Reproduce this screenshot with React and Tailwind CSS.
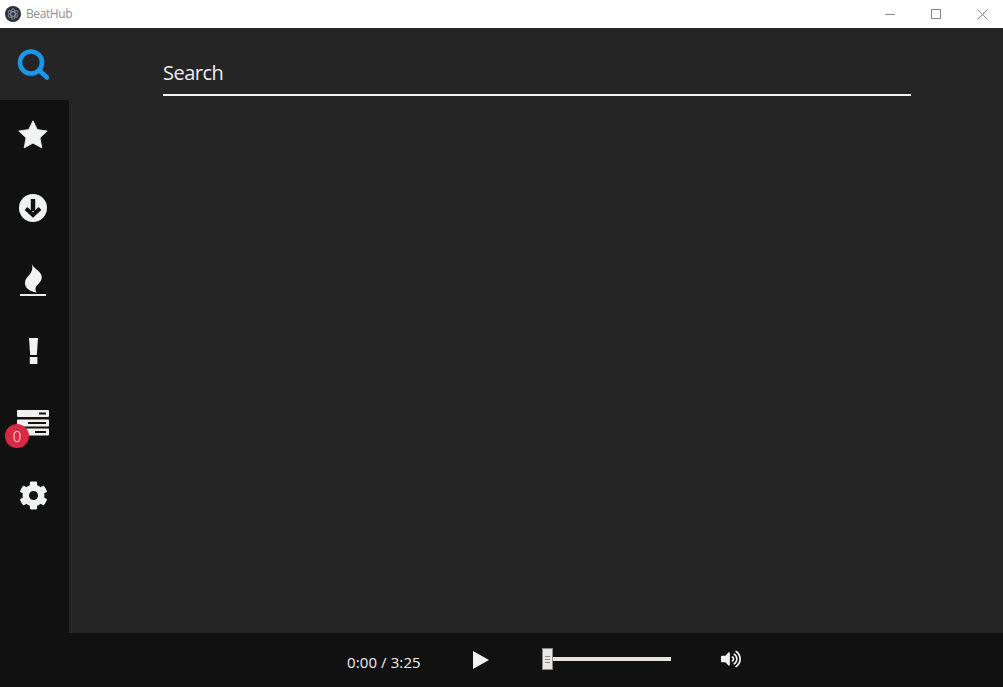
import React from 'react';
import { FaCog, FaVolumeUp } from 'react-icons/fa';

const font = { fontFamily: '"Open Sans", "Noto Sans", sans-serif' };

const SearchIcon = () => (
  <svg viewBox="0 0 32 32" className="w-8 h-8 mt-[2px]" fill="none" stroke="#1b96e8" strokeWidth="4.6" strokeLinecap="round">
    <circle cx="14" cy="13.5" r="11" />
    <path d="M22.5 21.5L30 28.5" />
  </svg>
);

const StarIcon = () => (
  <svg viewBox="0 0 30 29" className="w-[30px] h-[29px] mt-[-3px]" fill="#f1f3f3" stroke="#f1f3f3" strokeWidth="0.8" strokeLinejoin="round">
    <path d="M15 0.8L19.3 9.6L29.2 11L22 17.8L23.8 27.9L15 23.1L6.2 27.9L8 17.8L0.8 11L10.7 9.6Z" />
  </svg>
);

const DownloadIcon = () => (
  <svg viewBox="0 0 28 28" className="w-7 h-7">
    <circle cx="14" cy="14" r="14" fill="#f1f3f3" />
    <rect x="11.8" y="5" width="4.4" height="12" fill="#111111" />
    <path d="M7 14.5L14 21L21 14.5" fill="none" stroke="#111111" strokeWidth="4" />
  </svg>
);

const FlameIcon = () => (
  <svg viewBox="0 0 28 32" className="w-7 h-8 mt-[-1px]" fill="#f1f3f3">
    <path d="M12.7 0C14 3 18 5.5 20.8 8.5C23 11 23.3 14 22 16.5C20.5 19.5 17.5 21 16.7 23.5C16.2 25.3 16.5 27 17.5 28.5C13.5 28 8.5 26 6.8 22.5C5 18.5 6.3 15 9.3 12C12 9.2 14.5 5.5 12.7 0Z" />
    <rect x="1" y="30" width="26" height="2" fill="#ecebe8" />
  </svg>
);

const ExclaimIcon = () => (
  <svg viewBox="0 0 9 26" className="w-[9px] h-[26px] mt-[-2px]" fill="#f1f3f3">
    <path d="M0 0H9L7.8 17H1.2Z" />
    <rect x="0.8" y="19" width="7.6" height="7" />
  </svg>
);

const QueueIcon = () => (
  <svg viewBox="0 0 32 26" className="w-8 h-[26px] mt-[-2px]">
    <rect x="0" y="0" width="32" height="7" rx="1" fill="#f1f0ee" />
    <rect x="22" y="2.5" width="7" height="2" fill="#111" />
    <rect x="0" y="9.5" width="32" height="7" rx="1" fill="#f1f0ee" />
    <rect x="11" y="12" width="18" height="2" fill="#111" />
    <rect x="0" y="18.5" width="32" height="7" rx="1" fill="#f1f0ee" />
    <rect x="18" y="21" width="11" height="2" fill="#111" />
  </svg>
);

const AppLogo = () => (
  <svg viewBox="0 0 16 16" className="w-4 h-4">
    <circle cx="8" cy="8" r="8" fill="#2b2e3a" />
    <g fill="none" stroke="#a5b0bd" strokeWidth="0.7">
      <ellipse cx="8" cy="8" rx="5.5" ry="2.2" transform="rotate(30 8 8)" />
      <ellipse cx="8" cy="8" rx="5.5" ry="2.2" transform="rotate(90 8 8)" />
      <ellipse cx="8" cy="8" rx="5.5" ry="2.2" transform="rotate(150 8 8)" />
    </g>
  </svg>
);

const TitleBar = () => (
  <div className="h-7 shrink-0 bg-white flex items-center justify-between">
    <div className="flex items-center pl-[5px]">
      <AppLogo />
      <span className="ml-[5px] text-[12px] tracking-[-0.4px] text-[#8f8f8f]">BeatHub</span>
    </div>
    <div className="flex items-center mr-[-2px]">
      <div className="w-[46px] h-7 flex items-center justify-center">
        <svg viewBox="0 0 10 10" className="w-2.5 h-2.5"><path d="M0 5.5h10" stroke="#8a8a8a" /></svg>
      </div>
      <div className="w-[46px] h-7 flex items-center justify-center">
        <svg viewBox="0 0 10 10" className="w-2.5 h-2.5"><rect x="0.5" y="0.5" width="9" height="9" fill="none" stroke="#8a8a8a" /></svg>
      </div>
      <div className="w-[46px] h-7 flex items-center justify-center">
        <svg viewBox="0 0 11 11" className="w-[11px] h-[11px]"><path d="M0.5 0.5l10 10M10.5 0.5l-10 10" stroke="#8a8a8a" /></svg>
      </div>
    </div>
  </div>
);

const NavItem = ({ active, children }) => (
  <div className={`relative h-[72px] pr-[3px] flex items-center justify-center ${active ? 'bg-[#252525]' : ''}`}>
    {children}
  </div>
);

const Sidebar = () => (
  <nav className="w-[69px] shrink-0 bg-[#111111] flex flex-col">
    <NavItem active><SearchIcon /></NavItem>
    <NavItem><StarIcon /></NavItem>
    <NavItem><DownloadIcon /></NavItem>
    <NavItem><FlameIcon /></NavItem>
    <NavItem><ExclaimIcon /></NavItem>
    <NavItem>
      <QueueIcon />
      <span className="absolute left-[5px] top-[36px] w-6 h-6 rounded-full bg-[#d62a45] text-white text-[15px] font-light flex items-center justify-center">0</span>
    </NavItem>
    <NavItem><FaCog className="w-[29px] h-[29px] mt-[-2px] text-[#f1f3f3]" /></NavItem>
  </nav>
);

const PlayerBar = () => (
  <div className="h-[54px] shrink-0 bg-[#111111] flex items-center text-[#eeeeee]">
    <span className="ml-[347px] w-[100px] text-[15px] mt-[4px] tracking-[0.1px] whitespace-nowrap">0:00 / 3:25</span>
    <svg viewBox="0 0 16 18" className="ml-[26px] mt-[-1px] w-4 h-[18px]"><path d="M0 0L16 9L0 18Z" fill="#f1f3f3" /></svg>
    <div className="ml-[53px] w-[129px] h-[22px] mt-[-2px] relative flex items-center">
      <div className="w-full h-1 bg-[#e8e4df]" />
      <div className="absolute left-0 top-0 w-[11px] h-[22px] bg-[#e8e8e8] border border-[#8c8884] flex flex-col items-center justify-center gap-[2px]">
        <div className="w-[5px] h-px bg-[#8c8884]" />
        <div className="w-[5px] h-px bg-[#8c8884]" />
        <div className="w-[5px] h-px bg-[#8c8884]" />
      </div>
    </div>
    <FaVolumeUp className="ml-[50px] mt-[-2px] w-5 h-5 text-[#f1f3f3]" />
  </div>
);

export default function App() {
  return (
    <div className="w-[1003px] h-[687px] flex flex-col overflow-hidden bg-[#252525]" style={font}>
      <TitleBar />
      <div className="flex-1 flex min-h-0">
        <Sidebar />
        <main className="flex-1 pl-[94px] pr-[92px] pt-[27px]">
          <div className="h-[41px] border-b-2 border-[#f4f4f4] text-[20px] leading-9 tracking-[-0.5px] text-[#eeeeee]">Search</div>
        </main>
      </div>
      <PlayerBar />
    </div>
  );
}
